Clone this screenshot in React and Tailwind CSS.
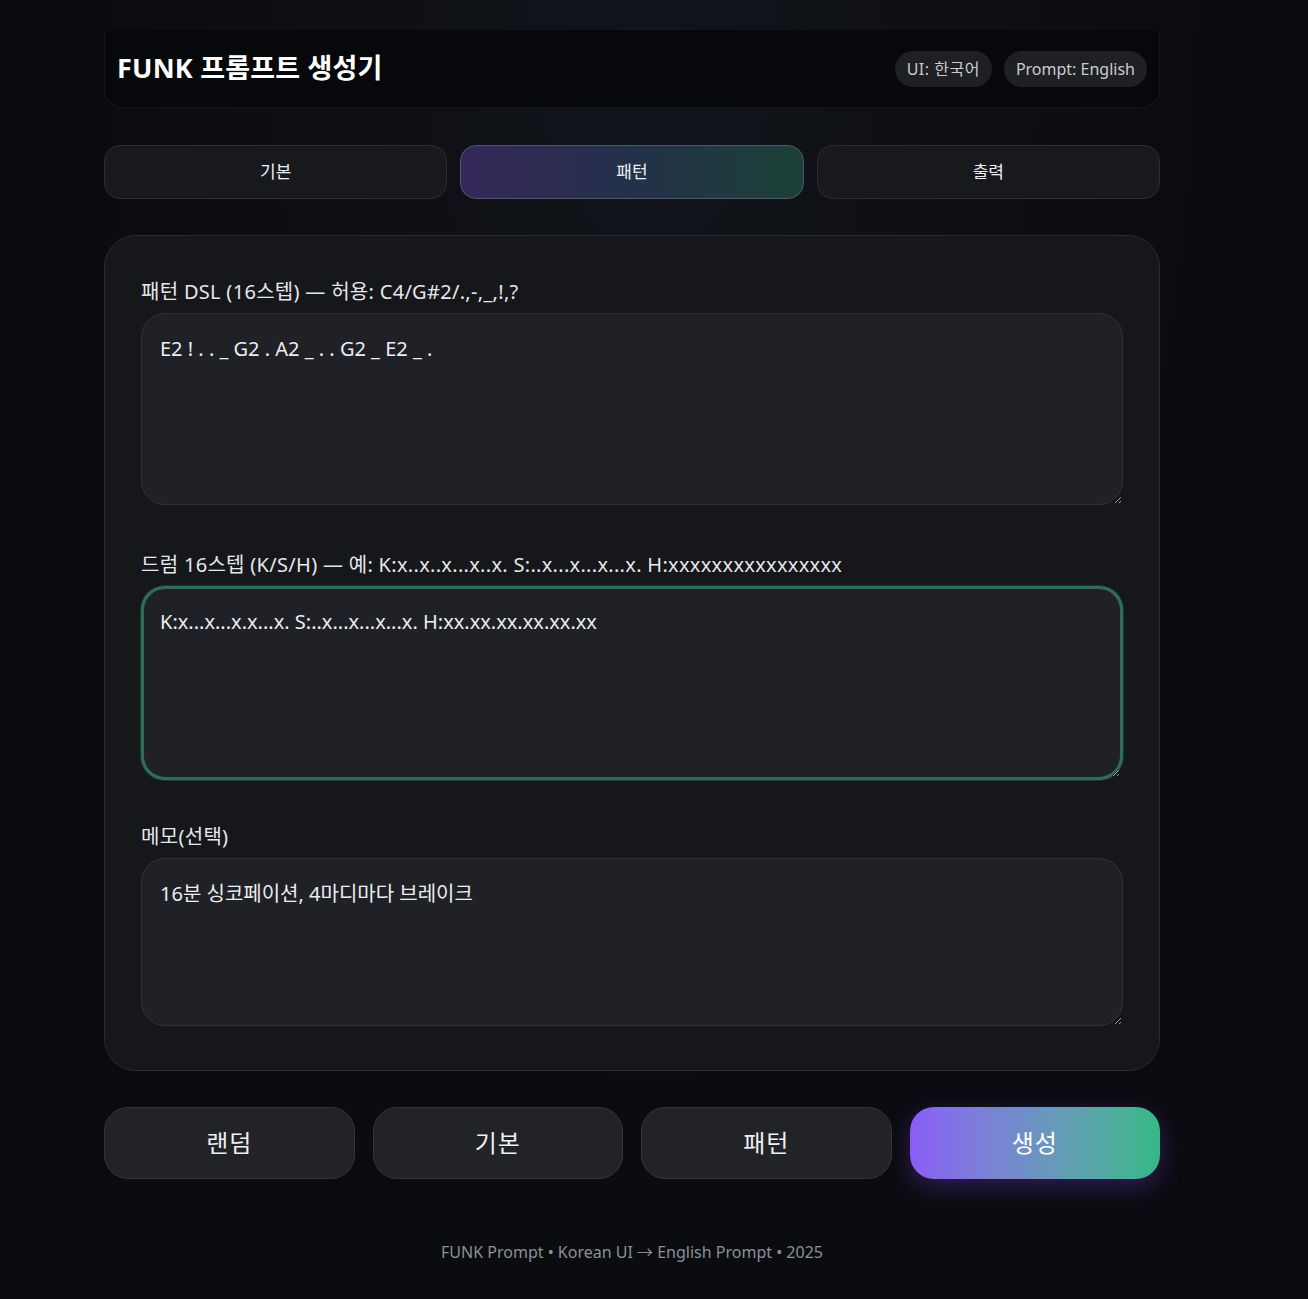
import { useState } from 'react';

const FONT = { fontFamily: '"Noto Sans", "Noto Sans CJK KR", sans-serif' };

function Field({ label, value, onChange, focused, h, className = '' }) {
    return (
        <div className={`flex flex-col ${className}`}>
            <label className="text-[20px] text-[#e6e7ea] mb-[7px] leading-[28px] tracking-[0.3px]">{label}</label>
            <textarea
                value={value}
                onChange={onChange}
                className={`w-full ${h} rounded-[24px] bg-[#1f2126] text-[20px] text-[#eceef1] leading-[28px] outline-none resize-y ${
                    focused
                        ? 'border-[3px] border-[#2f6d57] px-[16px] py-[19px] shadow-[0_0_0_1px_#1d3a31]'
                        : 'border border-[#303238] px-[18px] py-[21px]'
                }`}
            />
        </div>
    );
}

export default function App() {
    const [tab, setTab] = useState('패턴');
    const [pattern, setPattern] = useState('E2 ! . . _ G2 . A2 _ . . G2 _ E2 _ .');
    const [drum, setDrum] = useState('K:x...x...x.x...x. S:..x...x...x...x. H:xx.xx.xx.xx.xx.xx');
    const [memo, setMemo] = useState('16분 싱코페이션, 4마디마다 브레이크');

    const tabs = ['기본', '패턴', '출력'];

    return (
        <div style={FONT} className="min-h-[1299px] pt-[30px] bg-[#0b0c10] bg-[radial-gradient(ellipse_at_top,#11141a_0%,#0b0c10_60%)]">
            <div className="w-[1056px] ml-[104px]">
                {/* 헤더 */}
                <header className="h-[78px] flex items-center justify-between px-[12px] bg-[#07080b] rounded-b-[18px] border-b border-x border-[#15161a]">
                    <h1 className="text-[27px] font-bold text-white tracking-[0.2px]">FUNK 프롬프트 생성기</h1>
                    <div className="flex gap-[12px]">
                        <span className="h-[36px] px-[12px] flex items-center rounded-full bg-[#1f2024] text-[16px] text-[#c9cbd0] tracking-[0.5px]">UI: 한국어</span>
                        <span className="h-[36px] px-[12px] flex items-center rounded-full bg-[#1f2024] text-[16px] text-[#c9cbd0]">Prompt: English</span>
                    </div>
                </header>

                {/* 탭 */}
                <nav className="mt-[37px] grid grid-cols-3 gap-[13px]">
                    {tabs.map((t) => (
                        <button
                            key={t}
                            onClick={() => setTab(t)}
                            className={`h-[54px] rounded-[16px] text-[17px] text-[#eef0f3] border ${
                                tab === t
                                    ? 'bg-gradient-to-r from-[#35285a] via-[#23304a] to-[#1b4135] border-[#4f5670]'
                                    : 'bg-[#18191d] border-[#2c2d32]'
                            }`}
                        >
                            {t}
                        </button>
                    ))}
                </nav>

                {/* 패턴 카드 */}
                <section className="mt-[36px] rounded-[32px] bg-[#16171b] border border-[#2a2b30] px-[36px] pt-[42px] pb-[44px] flex flex-col">
                    <Field
                        label="패턴 DSL (16스텝) — 허용: C4/G#2/.,-,_,!,?"
                        value={pattern}
                        onChange={(e) => setPattern(e.target.value)}
                        h="h-[192px]"
                        className="mb-[46px]"
                    />
                    <Field
                        label="드럼 16스텝 (K/S/H) — 예: K:x..x..x...x..x. S:..x...x...x...x. H:xxxxxxxxxxxxxxxx"
                        value={drum}
                        onChange={(e) => setDrum(e.target.value)}
                        h="h-[194px]"
                        focused
                        className="mb-[43px]"
                    />
                    <Field
                        label="메모(선택)"
                        value={memo}
                        onChange={(e) => setMemo(e.target.value)}
                        h="h-[168px]"
                    />
                </section>

                {/* 액션 버튼 */}
                <div className="mt-[36px] grid grid-cols-4 gap-[18px]">
                    {['랜덤', '기본', '패턴'].map((b) => (
                        <button key={b} className="h-[72px] rounded-[24px] bg-[#222327] border border-[#34353a] text-[24px] text-[#eef0f3] tracking-[1px]">
                            {b}
                        </button>
                    ))}
                    <button className="h-[72px] rounded-[24px] bg-gradient-to-r from-[#8b5cf6] to-[#34b884] text-[24px] text-white tracking-[1px] shadow-[0_8px_24px_rgba(109,60,220,0.35)]">
                        생성
                    </button>
                </div>

                <footer className="mt-[61px] pb-[36px] text-center text-[16px] text-[#8b9099]">
                    FUNK Prompt • Korean UI → English Prompt • 2025
                </footer>
            </div>
        </div>
    );
}
